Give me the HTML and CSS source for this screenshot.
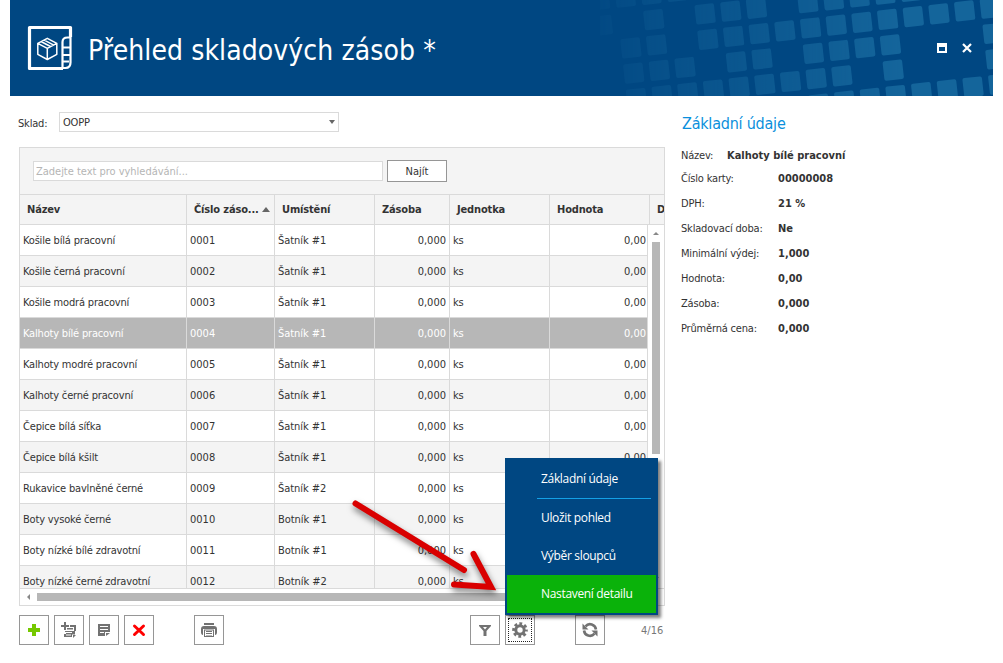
FILE: index.html
```html
<!DOCTYPE html>
<html lang="cs">
<head>
    <meta charset="UTF-8">
    <meta name="viewport" content="width=device-width, initial-scale=1.0">
    <title>Přehled skladových zásob</title>
    <link rel="stylesheet" href="styles.css">
</head>
<body>
    <div class="window">
        <header class="titlebar">
            <svg class="mosaic" width="403" height="96" viewBox="0 0 403 96">
                <defs>
                    <linearGradient id="fade" gradientUnits="userSpaceOnUse" x1="0" y1="0" x2="300" y2="0">
                        <stop offset="0" stop-color="#fff" stop-opacity="0.1"/>
                        <stop offset="0.2" stop-color="#fff" stop-opacity="0.32"/>
                        <stop offset="0.5" stop-color="#fff" stop-opacity="0.55"/>
                        <stop offset="1" stop-color="#fff"/>
                    </linearGradient>
                    <mask id="fadeMask" maskUnits="userSpaceOnUse" x="0" y="0" width="403" height="96">
                        <rect width="403" height="96" fill="url(#fade)"/>
                    </mask>
                </defs>
                <g mask="url(#fadeMask)">
                    <g id="squares" transform="translate(339 13.8) rotate(-6.3)"></g>
                </g>
            </svg>
            <svg class="logo" width="46" height="46" viewBox="0 0 46 46" fill="none" stroke="#fff">
                <path d="M43.500 12V2.500h-41v41H36" stroke-width="3.200" stroke-linejoin="round"/>
                <path d="M35.500 43V17q0-4.500 5-4.500h3v25q0 5.500-5 5.500H34" stroke-width="2.200"/>
                <path d="M36 22.500h7M36 30h7M36 36.500h6" stroke-width="2.200"/>
                <path d="M20.300 13.300l9.500 5v11l-9.500 5.200-9.500-5.200v-11zM10.800 18.300l9.500 5 9.500-5M20.300 23.300v11M14 16.500l9.500 5M16.800 14.800l9.500 5" stroke-width="1.500" stroke-linejoin="round"/>
            </svg>
            <h1>Přehled skladových zásob *</h1>
            <div class="window-buttons">
                <svg width="10" height="10" viewBox="0 0 10 10"><path d="M0 0h10v10H0zM2 4v4h6V4z" fill="#fff" fill-rule="evenodd"/></svg>
                <svg width="10" height="10" viewBox="0 0 10 10"><path d="M1 1l8 8M9 1L1 9" stroke="#fff" stroke-width="2.200"/></svg>
            </div>
        </header>

        <main class="content">
            <section class="left">
                <div class="filter">
                    <label>Sklad:</label>
                    <div class="select">OOPP<span class="arrow-down"></span></div>
                </div>

                <div class="grid">
                    <div class="search">
                        <input type="text" placeholder="Zadejte text pro vyhledávání...">
                        <button class="find">Najít</button>
                    </div>
                    <div class="grid-head">
                        <div>Název</div>
                        <div>Číslo záso...<span class="arrow-up"></span></div>
                        <div>Umístění</div>
                        <div>Zásoba</div>
                        <div>Jednotka</div>
                        <div>Hodnota</div>
                        <div>D</div>
                    </div>
                    <div class="grid-body">
                        <div class="rows" id="rows"></div>
                        <div class="vscroll">
                            <span class="tip tip-up"></span>
                            <span class="thumb"></span>
                            <span class="tip tip-down"></span>
                        </div>
                    </div>
                    <div class="hscroll">
                        <span class="tip-left"></span>
                        <span class="thumb"></span>
                    </div>
                </div>

                <div class="toolbar">
                    <button class="tool"><svg width="16" height="16"><path d="M6 2h4v4h4v4h-4v4H6v-4H2V6h4z" fill="#76c800"/></svg></button>
                    <button class="tool">
                        <svg width="18" height="18" fill="#727272">
                            <path d="M4 1h2v3h3v2H6v3H4V6H1V4h3z"/>
                            <path d="M10 4h6v6h-2V6h-4zM7 7h6v1.500H7zM5 10h10v3.500h-3V16H4v-3h2v-1h6v-1H5zM6 13.500v1h5v-1z" fill-rule="evenodd"/>
                            <path d="M13 14h3l-3 3z"/>
                        </svg>
                    </button>
                    <button class="tool">
                        <svg width="16" height="16" fill="#727272">
                            <path d="M2 2h12v8H9v4H2zM4 4v1h8V4zM4 7v1h8V7zM4 10v1h4v-1z" fill-rule="evenodd"/>
                            <path d="M10 11h4l-4 3z"/>
                        </svg>
                    </button>
                    <button class="tool"><svg width="16" height="16"><path d="M3.500 4l9 8.500M12.500 4l-9 8.500" stroke="#f00" stroke-width="3" stroke-linecap="round"/></svg></button>
                    <button class="tool print">
                        <svg width="18" height="16" fill="#727272">
                            <path d="M4 1h10v2H4zM4 4h10q3 0 3 3v3q0 3-2 3V7H3v6q-2 0-2-3V7q0-3 3-3z"/>
                            <path d="M4 7.500h10V15H4zM5 8.500V14h8V8.500z" fill-rule="evenodd"/>
                            <path d="M6 9h6v1H6zM6 11h6v1H6zM6 13h6v.500H6z"/>
                        </svg>
                    </button>
                    <button class="tool filter-btn"><svg width="16" height="16"><path d="M2 3h12v1l-4.500 5v5h-3V9L2 4zM6 5l2 2.500L10 5z" fill="#727272" fill-rule="evenodd"/></svg></button>
                    <button class="tool focused">
                        <svg width="18" height="18" fill="none" stroke="#727272">
                            <circle cx="9" cy="9" r="4.200" stroke-width="3"/>
                            <circle cx="9" cy="9" r="6.400" stroke-width="2.800" stroke-dasharray="2.800 2.226" stroke-dashoffset="1.400"/>
                        </svg>
                    </button>
                    <button class="tool refresh">
                        <svg width="18" height="18" fill="none" stroke="#727272" stroke-width="2.600">
                            <g transform="translate(18 0) scale(-1 1)">
                                <path d="M3 8.500a6 6 0 0 1 10.500-3.200M15 9.500a6 6 0 0 1-10.500 3.200"/>
                                <path d="M16.500 2.500v6h-6zM1.500 15.500v-6h6z" fill="#727272" stroke="none"/>
                            </g>
                        </svg>
                    </button>
                    <span class="counter">4/16</span>
                </div>
            </section>

            <aside class="details">
                <h2>Základní údaje</h2>
                <dl>
                    <div class="name"><dt>Název:</dt><dd>Kalhoty bílé pracovní</dd></div>
                    <div><dt>Číslo karty:</dt><dd>00000008</dd></div>
                    <div><dt>DPH:</dt><dd>21 %</dd></div>
                    <div><dt>Skladovací doba:</dt><dd>Ne</dd></div>
                    <div><dt>Minimální výdej:</dt><dd>1,000</dd></div>
                    <div><dt>Hodnota:</dt><dd>0,00</dd></div>
                    <div><dt>Zásoba:</dt><dd>0,000</dd></div>
                    <div><dt>Průměrná cena:</dt><dd>0,000</dd></div>
                </dl>
            </aside>
        </main>

        <nav class="menu">
            <a>Základní údaje</a>
            <hr>
            <a>Uložit pohled</a>
            <a>Výběr sloupců</a>
            <a class="active">Nastavení detailu</a>
        </nav>

        <svg class="pointer" width="160" height="110" viewBox="0 0 160 110">
            <path d="M10.500 13.500L119 80M128.500 64l17.500 33-37-2.500" fill="none" stroke="#d90000" stroke-width="6" stroke-linecap="round"/>
        </svg>
    </div>

    <script>
        const items = [
            ["Košile bílá pracovní", "Šatník #1"],
            ["Košile černá pracovní", "Šatník #1"],
            ["Košile modrá pracovní", "Šatník #1"],
            ["Kalhoty bílé pracovní", "Šatník #1"],
            ["Kalhoty modré pracovní", "Šatník #1"],
            ["Kalhoty černé pracovní", "Šatník #1"],
            ["Čepice bílá síťka", "Šatník #1"],
            ["Čepice bílá kšilt", "Šatník #1"],
            ["Rukavice bavlněné černé", "Šatník #2"],
            ["Boty vysoké černé", "Botník #1"],
            ["Boty nízké bílé zdravotní", "Botník #1"],
            ["Boty nízké černé zdravotní", "Botník #2"]
        ];

        // Řádky tabulky
        document.getElementById("rows").innerHTML = items.map((item, i) => {
            let number = String(i + 1).padStart(4, "0");
            return `<div class="row${i === 3 ? " selected" : ""}">
                <div>${item[0]}</div><div class="num">${number}</div><div class="place">${item[1]}</div>
                <div class="right num">0,000</div><div>ks</div><div class="right num">0,00</div>
            </div>`;
        }).join("");

        // Čtverečky v záhlaví, sloupce -13 až 2, řádky -2 až 3
        const mosaic = [
            "#####...........",
            "#.#.###.#####...",
            ".##.############",
            ".###.##.####...#",
            ".#########.#...#",
            "........########"
        ];
        let squares = "";
        mosaic.forEach((line, r) => {
            [...line].forEach((c, i) => {
                if (c === "#") {
                    let x = (i - 13) * 25.83 - 9.8;
                    let y = (r - 2) * 25.5 - 9.8;
                    squares += `<rect x="${x}" y="${y}" width="19.600" height="19.600" rx="2" fill="#14659b"/>`;
                }
            });
        });
        document.getElementById("squares").innerHTML = squares;
    </script>
</body>
</html>
```
FILE: styles.css
```css
* {
    box-sizing: border-box;
}

body {
    margin: 0;
    background-color: #fff;
    color: #333;
    font-family: "DejaVu Sans Condensed", "DejaVu Sans", sans-serif;
    font-stretch: condensed;
    font-size: 11px;
    letter-spacing: -0.18px;
}

.window {
    position: relative;
    width: 983px;
    height: 663px;
    margin-left: 10px;
    overflow: hidden;
}

.titlebar {
    position: relative;
    display: flex;
    align-items: center;
    height: 96px;
    padding: 0 21px 0 17px;
    background-color: #004782;
    color: #fff;
}

.mosaic {
    position: absolute;
    top: 0;
    left: 590px;
}

.titlebar h1 {
    margin: 4px 0 0 15px;
    font-size: 28px;
    font-weight: normal;
    letter-spacing: 0.1px;
    white-space: nowrap;
}

.window-buttons {
    position: relative;
    display: flex;
    gap: 15px;
    margin-left: auto;
}

.content {
    display: flex;
}

.left {
    width: 655px;
    padding: 16px 0 0 9px;
}

.filter {
    display: flex;
    align-items: center;
    height: 20px;
}

.filter label {
    width: 41px;
    padding-top: 2px;
    margin-left: -1px;
}

.select {
    display: flex;
    align-items: center;
    justify-content: space-between;
    width: 280px;
    height: 20px;
    padding: 0 3px 0 3px;
    border: 1px solid #dadada;
}

.arrow-down {
    border: 3.5px solid transparent;
    border-top: 4px solid #666;
    border-bottom: 0;
}

.arrow-up {
    flex: none;
    margin-left: 3px;
    border: 4.5px solid transparent;
    border-bottom: 5px solid #666;
    border-top: 0;
}

.grid {
    width: 646px;
    height: 459px;
    margin-top: 15px;
    border: 1px solid #dadada;
    overflow: hidden;
}

.search {
    display: flex;
    align-items: center;
    gap: 4px;
    height: 46px;
    padding-left: 13px;
    background-color: #f4f4f4;
}

.search input {
    width: 350px;
    height: 20px;
    padding: 0 2px;
    border: 1px solid #dadada;
    font: inherit;
    letter-spacing: -0.02px;
}

.search input::placeholder {
    color: #b5b5b5;
}

.find {
    width: 60px;
    height: 22px;
    padding: 0;
    border: 1px solid #969696;
    background-color: #fff;
    color: #333;
    font: inherit;
}

.grid-head,
.row {
    display: grid;
    grid-template-columns: 167px 88px 100px 75px 100px 100px 40px;
}

.grid-head {
    height: 31px;
    border-top: 1px solid #dadada;
    border-bottom: 1px solid #dadada;
    background-color: #f4f4f4;
    font-weight: bold;
    letter-spacing: -0.15px;
}

.grid-head div {
    display: flex;
    align-items: center;
    padding-left: 7px;
    border-right: 1px solid #dadada;
    white-space: nowrap;
}

.grid-body {
    display: flex;
    height: 363px;
    overflow: hidden;
}

.rows {
    width: 628px;
    flex: none;
}

.row {
    grid-template-columns: 167px 88px 100px 75px 100px 98px;
    height: 31px;
    border-bottom: 1px solid #dadada;
}

.row:nth-child(even) {
    background-color: #f4f4f4;
}

.row div {
    padding: 1px 3px 0;
    border-right: 1px solid #dadada;
    line-height: 29px;
    white-space: nowrap;
}

.row .num {
    letter-spacing: 0;
}

.row .place {
    letter-spacing: -0.05px;
}

.row .right {
    text-align: right;
}

.row .right:last-child {
    padding-right: 1px;
}

.row.selected {
    background-color: #b7b7b7;
    color: #fff;
}

.vscroll {
    display: flex;
    flex-direction: column;
    align-items: center;
    width: 16px;
    padding: 7px 0 8px;
}

.vscroll .thumb {
    width: 8px;
    height: 212px;
    margin-top: 7px;
    background-color: #b7b7b7;
}

.tip {
    border: 3px solid transparent;
}

.tip-up {
    border-top: 0;
    border-bottom-color: #888;
}

.tip-down {
    margin-top: auto;
    border-bottom: 0;
    border-top-color: #888;
}

.hscroll {
    display: flex;
    align-items: center;
    height: 17px;
    padding-left: 7px;
    border-top: 1px solid #dadada;
}

.tip-left {
    border: 3px solid transparent;
    border-left: 0;
    border-right-color: #888;
}

.hscroll .thumb {
    width: 560px;
    height: 8px;
    margin-left: 7px;
    background-color: #b7b7b7;
}

.toolbar {
    display: flex;
    gap: 5px;
    margin-top: 9px;
}

.tool {
    display: flex;
    align-items: center;
    justify-content: center;
    width: 30px;
    height: 30px;
    padding: 0;
    border: 1px solid #969696;
    background-color: #fff;
}

.tool.print {
    margin-left: 35px;
}

.tool.filter-btn {
    margin-left: 241px;
}

.tool.focused {
    outline: 1px dotted #222;
    outline-offset: -4px;
}

.tool.refresh {
    margin-left: 35px;
}

.counter {
    margin-left: 31px;
    color: #777;
    line-height: 31px;
    letter-spacing: 0;
}

.details {
    padding: 18px 0 0 16px;
}

.details h2 {
    margin: 0 0 11px 1px;
    color: #0a8fdc;
    font-size: 16px;
    font-weight: normal;
    line-height: 20px;
    letter-spacing: -0.22px;
}

.details dl {
    margin: 0;
}

.details dl div {
    display: flex;
    height: 25px;
    line-height: 22px;
}

.details dl .name {
    height: 23px;
}

.details dt {
    width: 97px;
}

.details .name dt {
    width: 46px;
}

.details dd {
    margin: 0;
    font-weight: bold;
    letter-spacing: 0;
}

.menu {
    position: absolute;
    top: 458px;
    left: 495px;
    width: 153px;
    height: 157px;
    padding: 2px;
    background-color: #004782;
    box-shadow: 3px 3px 3px rgba(0, 0, 0, 0.5);
    color: #fff;
    font-family: "Open Sans", "Noto Sans", sans-serif;
    font-size: 12px;
    font-stretch: normal;
    letter-spacing: -0.33px;
}

.menu a {
    display: block;
    height: 38px;
    padding-left: 34px;
    line-height: 38px;
}

.menu hr {
    height: 1px;
    margin: 0 5px 0 30px;
    border: 0;
    background-color: #14a0e6;
}

.menu .active {
    background-color: #0ab20a;
}

.pointer {
    position: absolute;
    top: 490px;
    left: 335px;
    filter: drop-shadow(1px 4px 3px rgba(0, 0, 0, 0.5));
}
```
